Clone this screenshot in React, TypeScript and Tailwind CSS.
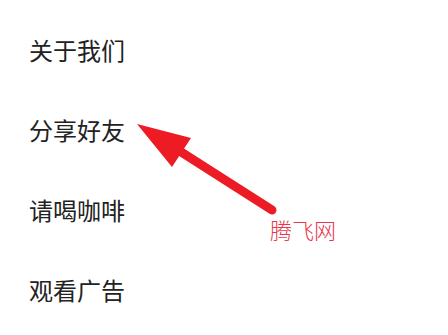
const items = ["关于我们", "分享好友", "请喝咖啡", "观看广告"];

export default function App() {
  return (
    <div className="relative w-[448px] h-[335px] overflow-hidden bg-white">
      <div className="pt-[10px] pl-[29px]">
        {items.map((t) => (
          <div
            key={t}
            className="h-20 flex items-center text-[24px] text-[#222222]"
            style={{ fontFamily: '"Noto Sans CJK SC", sans-serif' }}
          >
            {t}
          </div>
        ))}
      </div>

      {/* annotation arrow */}
      <svg
        className="absolute left-0 top-0 pointer-events-none"
        width="448"
        height="335"
        viewBox="0 0 448 335"
      >
        <line
          x1="272"
          y1="210"
          x2="178"
          y2="150"
          stroke="#ed1c24"
          strokeWidth="9"
          strokeLinecap="round"
        />
        <polygon points="137,124 191,138 172,167" fill="#ed1c24" />
      </svg>

      <div
        className="absolute left-[270px] top-[214px] text-[22px] font-light leading-[30px] text-[#e8364a]"
        style={{ fontFamily: '"Noto Sans CJK SC", sans-serif' }}
      >
        腾飞网
      </div>
    </div>
  );
}
